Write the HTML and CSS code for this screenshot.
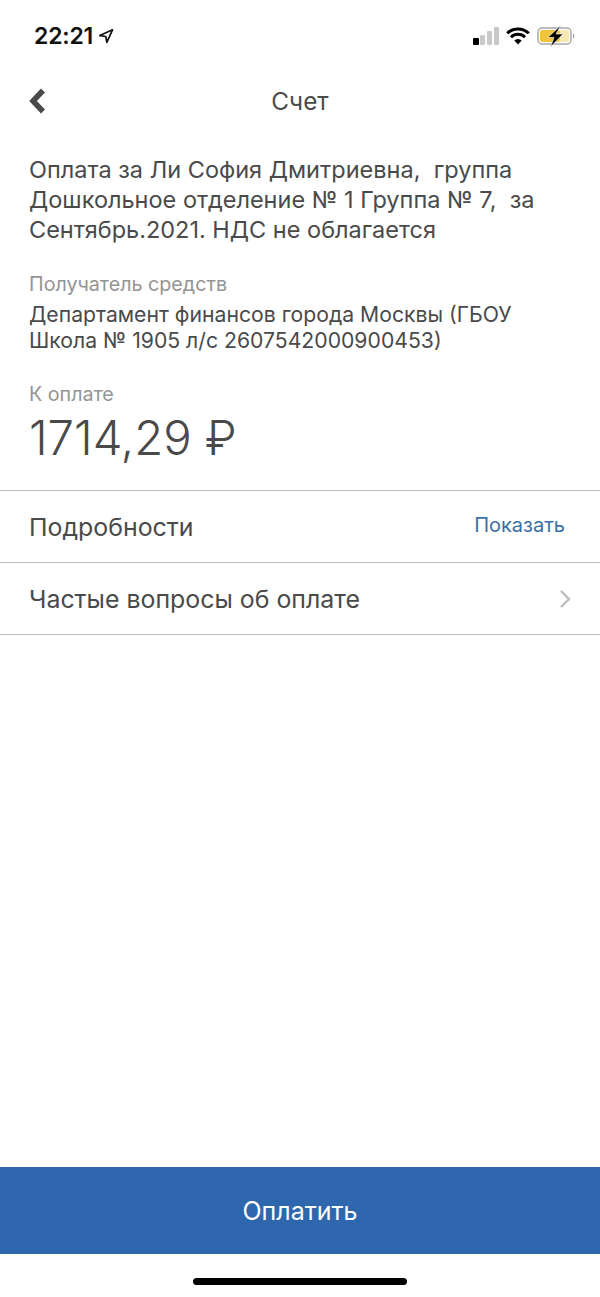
FILE: index.html
```html
<!DOCTYPE html>
<html lang="ru">
<head>
<meta charset="utf-8">
<title>Счет</title>
<link rel="stylesheet" href="styles.css">
</head>
<body>
<div class="screen">
  <div class="status">
    <div class="status-left">
      <span class="clock">22:21</span>
      <svg class="loc" width="16" height="16" viewBox="0 0 16 16"><path d="M14.5 1.8 1.8 7.6l6 .9 1 5.900z" fill="none" stroke="#111" stroke-width="1.700" stroke-linejoin="round"/></svg>
    </div>
    <div class="status-right">
      <svg class="signal" width="28" height="18" viewBox="0 0 28 18"><rect x="0" y="11" width="6" height="7" rx="1" fill="#000"/><rect x="7" y="8" width="5" height="10" rx="1" fill="#c9c9c9"/><rect x="14" y="4" width="5" height="14" rx="1" fill="#c9c9c9"/><rect x="21" y="0" width="5" height="18" rx="1" fill="#c9c9c9"/></svg>
      <svg class="wifi" width="24" height="18" viewBox="0 0 24 18"><path d="M1.200 6.300a15.400 15.400 0 0 1 21.600 0M5 10.200a10 10 0 0 1 14 0" fill="none" stroke="#000" stroke-width="3"/><path d="M12 17.500 8.300 13.600a5.300 5.300 0 0 1 7.400 0z" fill="#000"/></svg>
      <svg class="battery" width="40" height="22" viewBox="0 0 40 22"><rect x="1" y="3" width="33" height="16" rx="4" fill="#fff" stroke="#a8a8a8" stroke-width="1.500"/><rect x="3" y="5" width="20" height="12" rx="2" fill="#f2c33d"/><rect x="23" y="5" width="9" height="12" rx="1" fill="#f7e7b0"/><path d="M36 8.500c2 .5 2 4.500 0 5z" fill="#a8a8a8"/><path d="M24 0 11 12.500h6L13.500 22 26 9h-7z" fill="#000" stroke="#fff" stroke-width=".6"/></svg>
    </div>
  </div>
  <header class="nav">
    <svg class="back" width="20" height="26" viewBox="0 0 20 26"><path d="M16 2.500 6 13l10 10.500" fill="none" stroke="#4a4a4a" stroke-width="5.500"/></svg>
    <h1 class="nav-title">Счет</h1>
  </header>
  <main class="content">
    <p class="purpose">Оплата за Ли София Дмитриевна,&nbsp; группа Дошкольное отделение № 1 Группа № 7,&nbsp; за Сентябрь.2021. НДС не облагается</p>
    <div class="label recipient-label">Получатель средств</div>
    <p class="recipient">Департамент финансов города Москвы (ГБОУ Школа № 1905 л/с 2607542000900453)</p>
    <div class="label pay-label">К оплате</div>
    <div class="amount">1714,29 ₽</div>
  </main>
  <div class="rows">
    <div class="row"><span>Подробности</span><span class="row-link">Показать</span></div>
    <div class="row"><span>Частые вопросы об оплате</span>
      <svg class="chev" width="14" height="22" viewBox="0 0 14 22"><path d="M3 3l8 8-8 8" fill="none" stroke="#bdbdbd" stroke-width="2.400"/></svg>
    </div>
  </div>
  <div class="spacer"></div>
  <button class="pay">Оплатить</button>
  <div class="home-area"><div class="home"></div></div>
</div>
</body>
</html>
```
FILE: styles.css
```css
* { box-sizing: border-box; }
html, body { margin: 0; padding: 0; background: #fff; }
body { font-family: Inter, "Noto Sans", sans-serif; color: #4a4a4a; }
.screen { width: 600px; height: 1297px; display: flex; flex-direction: column; overflow: hidden; }
.status { height: 72px; display: flex; justify-content: space-between; align-items: center; padding: 0 23px 0 34px; }
.status-left { display: flex; align-items: center; gap: 5px; }
.clock { font-size: 23px; font-weight: 600; color: #111; letter-spacing: -0.2px; }
.status-right { display: flex; align-items: center; gap: 7px; }
.signal { margin-right: -2px; }
.nav { height: 60px; padding-bottom: 3px; display: flex; align-items: center; justify-content: center; position: relative; }
.back { position: absolute; left: 27px; top: 16px; }
.nav-title { margin: 0; font-size: 24.3px; font-weight: 400; color: #4a4a4a; }
.content { padding: 23px 29px 0; }
.purpose { margin: 0; font-size: 23.5px; line-height: 30px; }
.label { font-size: 19.7px; line-height: 24px; color: #949494; }
.recipient-label { margin-top: 27px; }
.recipient { margin: 5px 0 0; font-size: 21.2px; line-height: 26px; }
.pay-label { margin-top: 29px; }
.amount { font-size: 47.300px; line-height: 56px; margin-top: 4px; font-weight: 300; }
.rows { margin-top: 24px; border-top: 1px solid #bcbcbc; }
.row { height: 72px; border-bottom: 1px solid #bcbcbc; display: flex; align-items: center; justify-content: space-between; padding: 0 28px 0 29px; font-size: 24.900px; }
.row-link { font-size: 20px; color: #3a70a6; margin: 0 7px 3px 0; }
.spacer { flex: 1; }
.pay { height: 87px; border: 0; background: #2f67ae; color: #fff; font: inherit; font-size: 25px; padding: 0; }
.home-area { height: 43px; display: flex; justify-content: center; padding-top: 24px; }
.home { width: 214px; height: 7px; border-radius: 4px; background: #000; }
```
